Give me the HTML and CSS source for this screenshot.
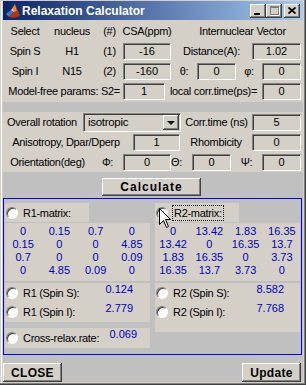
FILE: index.html
```html
<!DOCTYPE html>
<html lang="en">
<head>
    <meta charset="UTF-8">
    <title>Relaxation Calculator</title>
    <link rel="stylesheet" href="styles.css">
</head>
<body>
<div class="window">
    <div class="titlebar">
        <svg class="app-icon" width="16" height="16" viewBox="0 0 16 16">
            <polygon points="1,11 6,7 9,9 4,14" fill="#3a78c8"/>
            <polygon points="4,14 9,9 12,8 15,13 9,15" fill="#b8300c"/>
            <polygon points="6,7 10,1 12,8 9,9" fill="#f08a24"/>
            <polygon points="10,1 15,13 12,8" fill="#d84a14"/>
            <polygon points="6,7 8,6 9,9" fill="#ffd8a0"/>
        </svg>
        <span class="title">Relaxation Calculator</span>
        <div class="caption-btns">
            <span class="cap-btn min"><i></i></span>
            <span class="cap-btn max"><i></i></span>
            <span class="cap-btn close">
                <svg width="8" height="7" viewBox="0 0 8 7"><path d="M0.5 0.5 L7.5 6.5 M7.5 0.5 L0.5 6.5" stroke="#000" stroke-width="1.7"/></svg>
            </span>
        </div>
    </div>

    <div class="figure">
        <div class="panel spins">
            <div class="row">
                <span class="cell w44">Select</span>
                <span class="cell w50">nucleus</span>
                <span class="cell w25">(#)</span>
                <span class="cell w50">CSA(ppm)</span>
                <span class="cell vec">Internuclear Vector</span>
            </div>
            <div class="row">
                <span class="cell w44">Spin S</span>
                <span class="cell w50">H1</span>
                <span class="cell w25">(1)</span>
                <span class="edit w48 ml1">-16</span>
                <span class="cell w81">Distance(A):</span>
                <span class="edit w49">1.02</span>
            </div>
            <div class="row">
                <span class="cell w44">Spin I</span>
                <span class="cell w50">N15</span>
                <span class="cell w25">(2)</span>
                <span class="edit w48 ml1">-160</span>
                <span class="cell w26">&theta;:</span>
                <span class="edit w39">0</span>
                <span class="cell w26">&phi;:</span>
                <span class="edit w39">0</span>
            </div>
            <div class="row">
                <span class="cell right w119">Model-free params: S2=</span>
                <span class="edit w42 ml1">1</span>
                <span class="cell w97">local corr.time(ps)=</span>
                <span class="edit w39">0</span>
            </div>
        </div>

        <div class="panel rotation">
            <div class="row">
                <span class="cell w78">Overall rotation</span>
                <div class="popup">
                    <span>isotropic</span>
                    <span class="popup-arrow"><i></i></span>
                </div>
                <span class="cell w71">Corr.time (ns)</span>
                <span class="edit w49">5</span>
            </div>
            <div class="row">
                <span class="cell w126">Anisotropy, Dpar/Dperp</span>
                <span class="edit w47 ml4">1</span>
                <span class="cell w72">Rhombicity</span>
                <span class="edit w49">0</span>
            </div>
            <div class="row">
                <span class="cell w89">Orientation(deg)</span>
                <span class="cell w31">&Phi;:</span>
                <span class="edit w48">0</span>
                <span class="cell w21 left">&Theta;:</span>
                <span class="edit w39">0</span>
                <span class="cell w31">&Psi;:</span>
                <span class="edit w39">0</span>
            </div>
        </div>

        <div class="calc-row">
            <div class="button calc">Calculate</div>
        </div>

        <div class="results">
            <div class="res-col">
                <div class="panel mlabel">
                    <span class="radio"></span>
                    <span>R1-matrix:</span>
                </div>
                <div class="panel matrix">
                    <span>0</span><span>0.15</span><span>0.7</span><span>0</span>
                    <span>0.15</span><span>0</span><span>0</span><span>4.85</span>
                    <span>0.7</span><span>0</span><span>0</span><span>0.09</span>
                    <span>0</span><span>4.85</span><span>0.09</span><span>0</span>
                </div>
                <div class="panel spinvals">
                    <div class="srow">
                        <span class="radio"></span>
                        <span class="slabel">R1 (Spin S):</span>
                        <span class="sval">0.124</span>
                    </div>
                    <div class="srow">
                        <span class="radio"></span>
                        <span class="slabel">R1 (Spin I):</span>
                        <span class="sval">2.779</span>
                    </div>
                </div>
                <div class="panel cross">
                    <div class="srow">
                        <span class="radio"></span>
                        <span class="slabel">Cross-relax.rate:</span>
                        <span class="sval wide">0.069</span>
                    </div>
                </div>
            </div>

            <div class="res-col">
                <div class="panel mlabel">
                    <span class="radio on"></span>
                    <span class="focus">R2-matrix:</span>
                </div>
                <div class="panel matrix">
                    <span>0</span><span>13.42</span><span>1.83</span><span>16.35</span>
                    <span>13.42</span><span>0</span><span>16.35</span><span>13.7</span>
                    <span>1.83</span><span>16.35</span><span>0</span><span>3.73</span>
                    <span>16.35</span><span>13.7</span><span>3.73</span><span>0</span>
                </div>
                <div class="panel spinvals tall">
                    <div class="srow">
                        <span class="radio"></span>
                        <span class="slabel">R2 (Spin S):</span>
                        <span class="sval r2">8.582</span>
                    </div>
                    <div class="srow">
                        <span class="radio"></span>
                        <span class="slabel">R2 (Spin I):</span>
                        <span class="sval r2">7.768</span>
                    </div>
                </div>
            </div>

            <svg class="cursor" width="13" height="21" viewBox="0 0 13 21">
                <path d="M0.5 0.5 L0.5 16.5 L4.5 12.5 L7.5 19.5 L9.5 18.5 L6.5 11.5 L11.5 11.5 Z" fill="#fff" stroke="#000" stroke-width="1"/>
            </svg>
        </div>

        <div class="bottom-row">
            <div class="button">CLOSE</div>
            <div class="button">Update</div>
        </div>
    </div>
</div>
</body>
</html>
```

FILE: styles.css
```css
body {
    margin: 0;
    font-family: "Liberation Sans", Arial, sans-serif;
    font-size: 11px;
    letter-spacing: -0.3px;
    color: #000;
    background: #d4d0c8;
}

.window {
    width: 306px;
    height: 385px;
    box-sizing: border-box;
    padding: 1px 3px 3px 3px;
    background: #d4d0c8;
    box-shadow: inset -1px -1px #404040, inset -2px -2px #808080, inset 1px 1px #d4d0c8, inset 2px 2px #fff;
}

/* title bar */
.titlebar {
    height: 19px;
    margin-bottom: 1px;
    display: flex;
    align-items: center;
    background: linear-gradient(to right, #0a246a, #a6caf0);
    color: #fff;
}

.app-icon {
    margin: 0 1px 0 2px;
    flex: none;
}

.title {
    font-weight: bold;
    font-size: 12px;
    letter-spacing: 0;
    flex: 1;
}

.caption-btns {
    display: flex;
    margin-right: 3px;
}

.cap-btn {
    width: 16px;
    height: 14px;
    box-sizing: border-box;
    background: #d4d0c8;
    box-shadow: inset -1px -1px #404040, inset 1px 1px #fff, inset -2px -2px #808080;
    display: flex;
    align-items: center;
    justify-content: center;
}

.cap-btn.min {
    align-items: flex-end;
    justify-content: flex-start;
    padding: 0 0 3px 4px;
}

.cap-btn.min i {
    width: 6px;
    height: 2px;
    background: #000;
}

.cap-btn.max i {
    width: 9px;
    height: 9px;
    box-sizing: border-box;
    border: 1px solid #808080;
    border-top-width: 2px;
    box-shadow: 1px 1px #fff;
}

.cap-btn.close {
    margin-left: 2px;
}

/* figure */
.figure {
    height: 361px;
    background: #c0c0c0;
    display: flex;
    flex-direction: column;
}

.panel {
    background: #d4d0c8;
}

.spins {
    height: 81px;
}

.rotation {
    height: 60px;
    margin-top: 10px;
}

.row {
    display: flex;
    align-items: center;
    height: 20px;
}

.cell {
    flex: none;
    text-align: center;
    white-space: nowrap;
}

.cell.right {
    text-align: right;
    padding-right: 2px;
    box-sizing: border-box;
}

.cell.left {
    text-align: left;
}

.vec {
    flex: 1;
    padding-left: 10px;
}

.w21 { width: 21px; }
.w25 { width: 25px; }
.w26 { width: 26px; }
.w31 { width: 31px; }
.w39 { width: 39px; }
.w42 { width: 42px; }
.w44 { width: 44px; }
.w47 { width: 47px; }
.w48 { width: 48px; }
.w49 { width: 49px; }
.w50 { width: 50px; }
.w71 { width: 71px; }
.w72 { width: 72px; }
.w78 { width: 78px; }
.w81 { width: 81px; }
.w89 { width: 89px; }
.w97 { width: 97px; }
.w119 { width: 119px; }
.w126 { width: 126px; }
.ml1 { margin-left: 1px; }
.ml4 { margin-left: 4px; }

.edit {
    flex: none;
    height: 17px;
    box-sizing: border-box;
    border: 1px solid;
    border-color: #808080 #fff #fff #808080;
    box-shadow: inset 1px 1px #404040;
    background: #d4d0c8;
    text-align: center;
    line-height: 15px;
    letter-spacing: 0;
}

.popup {
    flex: none;
    width: 98px;
    height: 19px;
    margin-left: 2px;
    box-sizing: border-box;
    border: 1px solid;
    border-color: #808080 #fff #fff #808080;
    box-shadow: inset 1px 1px #404040;
    display: flex;
    align-items: center;
    justify-content: space-between;
    padding: 0 1px 0 4px;
    font-size: 11.5px;
}

.popup-arrow {
    width: 16px;
    height: 15px;
    box-sizing: border-box;
    margin-top: 1px;
    background: #d4d0c8;
    box-shadow: inset -1px -1px #404040, inset 1px 1px #fff, inset -2px -2px #808080;
    display: flex;
    align-items: center;
    justify-content: center;
}

.popup-arrow i {
    width: 0;
    height: 0;
    border-left: 4px solid transparent;
    border-right: 4px solid transparent;
    border-top: 4px solid #000;
}

.calc-row {
    height: 26px;
    padding-top: 6px;
    box-sizing: border-box;
}

.button {
    width: 59px;
    height: 19px;
    box-sizing: border-box;
    background: #d4d0c8;
    box-shadow: inset -1px -1px #404040, inset 1px 1px #fff, inset -2px -2px #808080;
    display: flex;
    align-items: center;
    justify-content: center;
    font-weight: bold;
    font-size: 12px;
    letter-spacing: 0.3px;
}

.button.calc {
    width: 99px;
    height: 18px;
    margin-left: 99px;
    letter-spacing: 1px;
}

/* results */
.results {
    position: relative;
    width: 299px;
    height: 157px;
    box-sizing: border-box;
    border: 1px solid #0000ff;
    padding: 4px 1px 0;
    display: flex;
    gap: 5px;
}

.res-col {
    width: 145px;
    display: flex;
    flex-direction: column;
}

.mlabel {
    width: 84px;
    height: 19px;
    display: flex;
    align-items: center;
}

.radio {
    flex: none;
    width: 12px;
    height: 12px;
    margin: 0 5px 0 1px;
    box-sizing: border-box;
    border-radius: 50%;
    border: 1px solid;
    border-color: #808080 #fff #fff #808080;
    box-shadow: inset 1px 1px #404040;
    background: #fff;
    display: flex;
    align-items: center;
    justify-content: center;
}

.radio.on::after {
    content: "";
    width: 4px;
    height: 4px;
    border-radius: 50%;
    background: #000;
}

.focus {
    outline: 1px dotted #000;
    outline-offset: 1px;
    margin-left: 1px;
}

.matrix {
    height: 58px;
    margin-top: 1px;
    box-sizing: border-box;
    padding-top: 2px;
    display: grid;
    grid-template-columns: repeat(4, 1fr);
    grid-auto-rows: 13px;
    line-height: 13px;
    text-align: center;
    color: #0000c0;
    letter-spacing: 0;
}

.spinvals {
    height: 39px;
    margin-top: 2px;
}

.spinvals.tall {
    height: 49px;
}

.cross {
    height: 20px;
    margin-top: 6px;
}

.srow {
    display: flex;
    align-items: center;
    height: 19px;
}

.cross .srow {
    height: 20px;
}

.slabel {
    width: 78px;
    white-space: nowrap;
}

.sval {
    width: 32px;
    align-self: flex-start;
    line-height: 13px;
    text-align: right;
    color: #0000c0;
    letter-spacing: 0;
}

.sval.wide {
    width: 36px;
}

.sval.r2 {
    width: 33px;
}

.cursor {
    position: absolute;
    left: 155px;
    top: 9px;
}

.bottom-row {
    display: flex;
    justify-content: space-between;
    padding: 8px 2px 0 0;
}
```
